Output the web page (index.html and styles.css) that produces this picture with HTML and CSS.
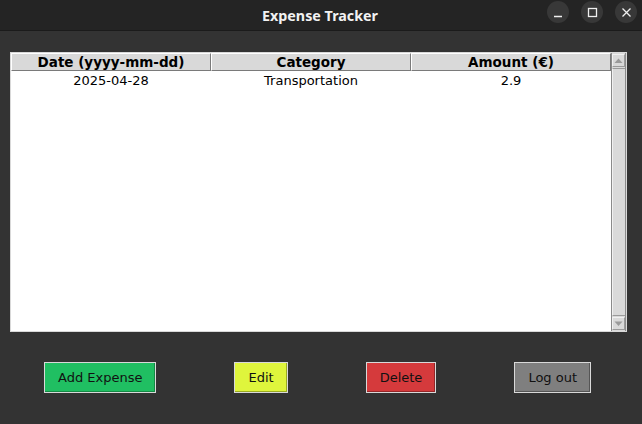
FILE: index.html
```html
<!DOCTYPE html>
<html>
<head>
<meta charset="utf-8">
<link rel="stylesheet" href="styles.css">
</head>
<body>
<div class="titlebar">
  <div class="title">Expense Tracker</div>
  <div class="controls">
    <span class="ctl"><svg width="22" height="22" viewBox="0 0 22 22"><line x1="7" y1="15.5" x2="15" y2="15.5" stroke="#f0f0f0" stroke-width="1.5"/></svg></span>
    <span class="ctl"><svg width="22" height="22" viewBox="0 0 22 22"><rect x="7.5" y="7.5" width="8" height="8" fill="none" stroke="#f0f0f0" stroke-width="1.3"/></svg></span>
    <span class="ctl"><svg width="22" height="22" viewBox="0 0 22 22"><path d="M7.5 7.5 L15.5 15.5 M15.5 7.5 L7.5 15.5" stroke="#f0f0f0" stroke-width="1.3"/></svg></span>
  </div>
</div>
<div class="main">
  <div class="tree">
    <div class="list">
      <div class="head">
        <div class="hcell">Date (yyyy-mm-dd)</div>
        <div class="hcell">Category</div>
        <div class="hcell">Amount (€)</div>
      </div>
      <div class="row">
        <div class="cell">2025-04-28</div>
        <div class="cell">Transportation</div>
        <div class="cell">2.9</div>
      </div>
    </div>
    <div class="scroll">
      <div class="arrow"><svg width="13" height="13" viewBox="0 0 13 13"><path d="M2.5 9 L6.5 4.5 L10.5 9 Z" fill="#9a9a9a"/></svg></div>
      <div class="slider"></div>
      <div class="arrow"><svg width="13" height="13" viewBox="0 0 13 13"><path d="M2.5 4.5 L6.5 9 L10.5 4.5 Z" fill="#9a9a9a"/></svg></div>
    </div>
  </div>
  <div class="buttons">
    <button class="btn green">Add Expense</button>
    <button class="btn yellow">Edit</button>
    <button class="btn red">Delete</button>
    <button class="btn grey">Log out</button>
  </div>
</div>
</body>
</html>
```
FILE: styles.css
```css
html, body {
  margin: 0;
  padding: 0;
  width: 642px;
  height: 424px;
  background: #333333;
  overflow: hidden;
}
.titlebar {
  height: 30px;
  background: #242424;
  border-bottom: 1px solid #1b1b1b;
  display: flex;
  align-items: center;
  justify-content: center;
  position: relative;
}
.title {
  font-family: "Noto Sans", sans-serif;
  font-weight: bold;
  font-size: 14.3px;
  color: #f2f2f2;
  margin-left: -2px;
}
.controls {
  position: absolute;
  right: 5px;
  top: 1px;
  display: flex;
  gap: 12px;
}
.ctl {
  width: 22px;
  height: 22px;
  border-radius: 50%;
  background: #383838;
  display: flex;
}
.main {
  padding: 21px 15px 0 10px;
}
.tree {
  width: 615px;
  height: 278px;
  border: 1px solid #d9d9d9;
  background: #ffffff;
  display: flex;
}
.list {
  width: 600px;
  font-family: "DejaVu Sans", sans-serif;
  font-size: 13px;
  color: #000;
}
.head {
  display: flex;
  height: 18px;
}
.hcell {
  width: 200px;
  box-sizing: border-box;
  background: #d9d9d9;
  border-top: 1px solid #ffffff;
  border-left: 1px solid #ffffff;
  border-right: 1px solid #7a7a7a;
  border-bottom: 1px solid #7a7a7a;
  font-weight: bold;
  font-size: 13.5px;
  text-align: center;
  line-height: 16px;
}
.row {
  display: flex;
  height: 20px;
}
.cell {
  width: 200px;
  text-align: center;
  line-height: 19px;
}
.scroll {
  width: 15px;
  box-sizing: border-box;
  border-left: 1px solid #8a8a8a;
  border-right: 1px solid #8a8a8a;
  background: #d9d9d9;
  display: flex;
  flex-direction: column;
  padding: 1px 0;
}
.arrow {
  height: 13px;
  box-sizing: border-box;
  border-top: 1px solid #f0f0f0;
  border-left: 1px solid #f0f0f0;
  border-bottom: 1px solid #9a9a9a;
  border-right: 1px solid #9a9a9a;
  background: #d9d9d9;
  display: flex;
  align-items: center;
  justify-content: center;
}
.arrow svg { flex: none; }
.slider {
  flex: 1;
  border-top: 1px solid #9a9a9a;
  border-bottom: 1px solid #9a9a9a;
  border-left: 1px solid #f0f0f0;
  background: #d9d9d9;
  margin: 1px 0;
}
.buttons {
  display: flex;
  gap: 78px;
  padding: 30px 0 0 34px;
}
.btn {
  font-family: "DejaVu Sans", sans-serif;
  font-size: 13px;
  color: #111;
  height: 31px;
  padding: 0 13px;
  border: 1px solid #d9d9d9;
  margin: 0;
}
.green { background: #20bf62; box-shadow: inset -1px -1px 0 #148a45; }
.yellow { background: #dff53c; box-shadow: inset -1px -1px 0 #9aab20; }
.red { background: #d53a3c; box-shadow: inset -1px -1px 0 #952628; }
.grey { background: #7f7f7f; box-shadow: inset -1px -1px 0 #555; }
```
